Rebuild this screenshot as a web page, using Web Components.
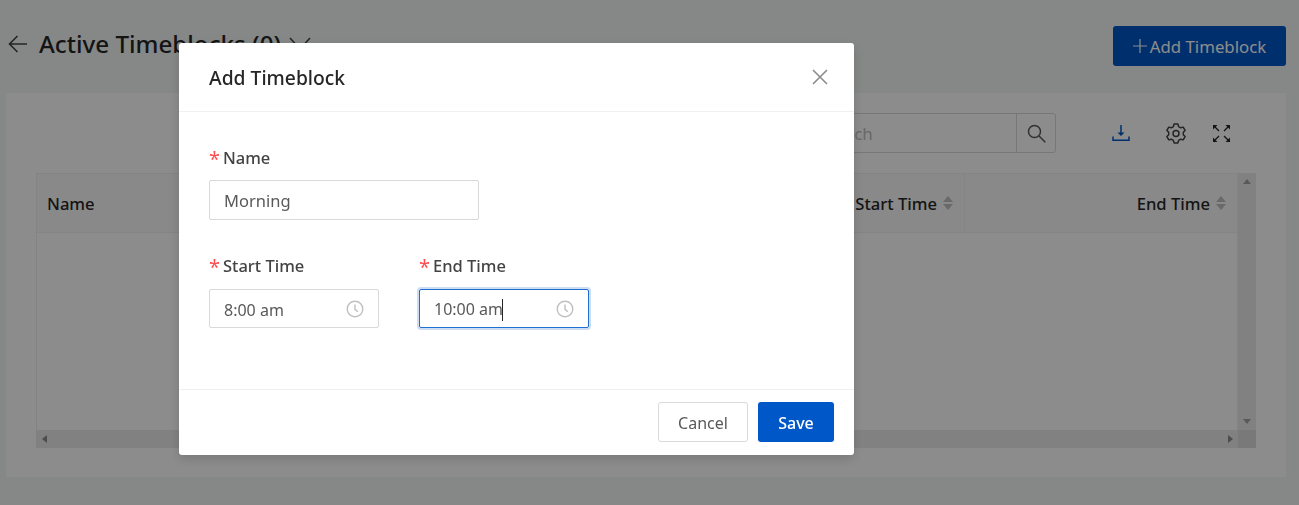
<!DOCTYPE html>
<html lang="en">
<head>
<meta charset="utf-8">
<title>Active Timeblocks</title>
<style>
  html, body { margin: 0; height: 100%; }
  body { background: #f3f7f4; font-family: "Noto Sans", "Liberation Sans", sans-serif; color: #262626; overflow: hidden; }
</style>
</head>
<body>
<tb-page>
  <tb-table></tb-table>
</tb-page>
<tb-modal heading="Add Timeblock">
  <tb-field label="Name" style="--w:270px">
    <tb-input value="Morning" style="--fs:16.5px"></tb-input>
  </tb-field>
  <div style="display:flex;gap:40px;margin-top:35px">
    <tb-field label="Start Time" style="--w:170px;--lb:12px">
      <tb-input value="8:00 am" clock style="--h:39px;--pt:2px"></tb-input>
    </tb-field>
    <tb-field label="End Time" style="--w:170px;--lb:12px">
      <tb-input value="10:00 am" clock focused style="--h:39px;--pt:2px"></tb-input>
    </tb-field>
  </div>
</tb-modal>

<script>
// Small helper: every element gets an open shadow root from a string
const tpl = (host, html) => {
  host.attachShadow({ mode: 'open' }).innerHTML = html;
};

const clockIcon = `<svg width="18" height="18" viewBox="0 0 18 18" fill="none" stroke="#bfbfbf" stroke-width="1.4"><circle cx="9" cy="9" r="7.8"/><path d="M9 4.6V9.4l2.8 2.4"/></svg>`;

// six lobed gear, same outline as the settings icon
const gearPath = () => {
  const pts = [];
  for (let i = 0; i < 6; i++) {
    const a = (Math.PI / 3) * i - Math.PI / 2;
    [[-0.36, 7.4], [-0.2, 9.6], [0.2, 9.6], [0.36, 7.4]].forEach(([d, r]) => {
      pts.push((10 + r * Math.cos(a + d)).toFixed(2) + ' ' + (10.5 + r * Math.sin(a + d)).toFixed(2));
    });
  }
  return 'M' + pts.join('L') + 'Z';
};

class TbPage extends HTMLElement {
  constructor() {
    super();
    tpl(this, `
      <style>
        :host { display: block; padding: 26px 13px 28px 6px; }
        .head { display: flex; align-items: flex-start; height: 40px; margin-bottom: 27px; }
        .back { display: flex; margin: 9px 12px 0 2px; }
        h1 { margin: -2px 0 0; font-size: 24.2px; font-weight: 500; line-height: 40px; color: #262626; white-space: nowrap; }
        .chev { display: flex; margin: 11px 0 0 8px; }
        .add { margin-left: auto; width: 173px; height: 40px; box-sizing: border-box; background: #0057c8; color: #fff; border-radius: 3px;
               display: flex; align-items: center; justify-content: center; font-size: 16.8px; gap: 3px; }
        .card { background: #fff; padding: 20px 30px 29px; height: 384px; box-sizing: border-box; display: flex; flex-direction: column; }
        .tools { display: flex; align-items: center; height: 40px; margin-bottom: 20px; justify-content: flex-end; }
        .search { display: flex; width: 256px; height: 40px; box-sizing: border-box; border: 1px solid #d9d9d9; border-radius: 3px; }
        .search span { flex: 1; padding: 1px 0 0 18px; line-height: 38px; font-size: 17px; color: #bfbfbf; text-align: left; }
        .search i { width: 38px; border-left: 1px solid #d9d9d9; display: flex; align-items: center; justify-content: center; }
        .icons { display: flex; align-items: center; }
        .icons svg { display: block; }
      </style>
      <div class="head">
        <span class="back"><svg width="19" height="18" viewBox="0 0 19 18" fill="none" stroke="#434343" stroke-width="1.6"><path d="M19 9H1.500M9.500 1L1.500 9l8 8"/></svg></span>
        <h1>Active Timeblocks (0)</h1>
        <span class="chev"><svg width="22" height="14" viewBox="0 0 22 14" fill="none" stroke="#434343" stroke-width="1.6"><path d="M1 1l10 11L21 1"/></svg></span>
        <div class="add"><svg width="14" height="14" viewBox="0 0 14 14" stroke="#fff" stroke-width="1.2"><path d="M7 0v14M0 7h14"/></svg><span>Add Timeblock</span></div>
      </div>
      <div class="card">
        <div class="tools">
          <div class="search"><span>Search</span><i><svg width="19" height="19" viewBox="0 0 19 19" fill="none" stroke="#595959" stroke-width="1.5"><circle cx="7.500" cy="7.500" r="6"/><path d="M12 12l6.300 6.300"/></svg></i></div>
          <div class="icons">
            <svg style="margin-left:56px" width="18" height="18" viewBox="0 0 18 18" fill="none" stroke="#0057c8" stroke-width="1.500"><path d="M9 1v10"/><path d="M5.500 8.500h7L9 12z" fill="#0057c8" stroke="none"/><path d="M1 12.500v3.700h16v-3.700"/></svg>
            <svg style="margin-left:36px" width="20" height="21" viewBox="0 0 20 21" fill="none" stroke="#434343" stroke-width="1.500" stroke-linejoin="round"><path class="gear"/><circle cx="10" cy="10.500" r="3"/></svg>
            <svg style="margin-left:27px" width="17" height="17" viewBox="0 0 17 17" fill="#262626" stroke="#262626" stroke-width="1.300"><g stroke="none"><path d="M0 0h4.500L0 4.500zM17 0v4.500L12.500 0zM0 17v-4.500L4.500 17zM17 17h-4.500L17 12.500z"/></g><path d="M2 2l4 4M15 2l-4 4M2 15l4-4M15 15l-4-4"/></svg>
            <span style="width:26px"></span>
          </div>
        </div>
        <slot></slot>
      </div>`);
    this.shadowRoot.querySelector('.gear').setAttribute('d', gearPath());
  }
}

class TbSorter extends HTMLElement {
  constructor() {
    super();
    tpl(this, `
      <style>
        :host { display: inline-flex; flex-direction: column; gap: 2px; margin-left: 6px; }
        i { display: block; width: 0; height: 0; border-left: 5px solid transparent; border-right: 5px solid transparent; }
        .u { border-bottom: 6px solid #bfbfbf; }
        .d { border-top: 6px solid #bfbfbf; }
      </style>
      <i class="u"></i><i class="d"></i>`);
  }
}

class TbTable extends HTMLElement {
  constructor() {
    super();
    tpl(this, `
      <style>
        :host { display: grid; grid-template-columns: 1fr 18px; grid-template-rows: 1fr 18px; height: 275px; font-size: 16.6px; }
        .body { border: 1px solid #f0f0f0; border-bottom: 0; display: flex; flex-direction: column; min-width: 0; }
        .row { display: grid; grid-template-columns: 1fr 230px 272px; height: 59px; box-sizing: border-box; background: #fafafa; border-bottom: 1px solid #f0f0f0; font-weight: 500; color: #262626; }
        .c { display: flex; align-items: center; padding: 0 11px 0 10px; }
        .r { justify-content: flex-end; border-right: 1px solid #f0f0f0; }
        .r:last-child { border-right: 0; }
        .v, .h { background: #ececec; position: relative; }
        .corner { background: #dcdcdc; }
        .a { position: absolute; width: 0; height: 0; border: 4px solid transparent; }
        .up { top: 6px; left: 5px; border-bottom: 5px solid #a3a3a3; border-top: 0; }
        .dn { bottom: 6px; left: 5px; border-top: 5px solid #a3a3a3; border-bottom: 0; }
        .lf { left: 6px; top: 5px; border-right: 5px solid #8c8c8c; border-left: 0; }
        .rt { right: 5px; top: 5px; border-left: 5px solid #8c8c8c; border-right: 0; }
      </style>
      <div class="body">
        <div class="row">
          <div class="c">Name</div>
          <div class="c r">Start Time<tb-sorter></tb-sorter></div>
          <div class="c r">End Time<tb-sorter></tb-sorter></div>
        </div>
      </div>
      <div class="v"><i class="a up"></i><i class="a dn"></i></div>
      <div class="h"><i class="a lf"></i><i class="a rt"></i></div>
      <div class="corner"></div>`);
  }
}

class TbModal extends HTMLElement {
  constructor() {
    super();
    tpl(this, `
      <style>
        :host { position: fixed; inset: 0; background: rgba(0,0,0,.45); display: flex; justify-content: flex-start; align-items: flex-start; padding: 43px 0 0 179px; box-sizing: border-box; }
        .box { width: 675px; height: 412px; background: #fff; border-radius: 3px; box-shadow: 0 4px 12px rgba(0,0,0,.15); display: flex; flex-direction: column; }
        header { height: 69px; box-sizing: border-box; border-bottom: 1px solid #f0f0f0; display: flex; align-items: center; justify-content: space-between; padding: 0 26px 0 30px; }
        h2 { margin: 0; font-size: 19.3px; font-weight: 500; color: #262626; }
        header svg { display: block; }
        main { flex: 1; padding: 35px 30px 0; }
        footer { height: 66px; box-sizing: border-box; border-top: 1px solid #f0f0f0; display: flex; justify-content: flex-end; gap: 10px; padding: 12px 20px 0; }
        .btn { height: 40px; box-sizing: border-box; border-radius: 3px; font-size: 16px; display: flex; align-items: center; justify-content: center; padding-top: 1px; }
        .cancel { width: 90px; border: 1px solid #d9d9d9; color: #595959; }
        .save { width: 76px; background: #0057c8; color: #fff; font-weight: 500; }
      </style>
      <div class="box">
        <header>
          <h2></h2>
          <svg width="16" height="16" viewBox="0 0 16 16" fill="none" stroke="#8c8c8c" stroke-width="1.6"><path d="M1 1l14 14M15 1L1 15"/></svg>
        </header>
        <main><slot></slot></main>
        <footer><div class="btn cancel">Cancel</div><div class="btn save">Save</div></footer>
      </div>`);
    this.shadowRoot.querySelector('h2').textContent = this.getAttribute('heading');
  }
}

class TbField extends HTMLElement {
  constructor() {
    super();
    tpl(this, `
      <style>
        :host { display: block; width: var(--w); }
        label { display: flex; align-items: center; height: 22px; line-height: 22px; margin-bottom: var(--lb, 11px); font-size: 16.5px; font-weight: 500; color: #434343; }
        b { width: 14px; flex: none; color: #ff4d4f; font-weight: 400; font-size: 20px; line-height: 22px; transform: translateY(1px); }
      </style>
      <label><b>*</b><span></span></label>
      <slot></slot>`);
    this.shadowRoot.querySelector('span').textContent = this.getAttribute('label');
  }
}

class TbInput extends HTMLElement {
  constructor() {
    super();
    const focused = this.hasAttribute('focused');
    tpl(this, `
      <style>
        :host { display: block; }
        .box { height: var(--h, 40px); box-sizing: border-box; border: 1px solid #d9d9d9; border-radius: 2px; display: flex; align-items: center; padding: 0 14px; font-size: var(--fs, 16px); color: #595959; }
        .on { border-color: #1f6fd1; box-shadow: 0 0 0 2px rgba(0,87,200,.2); }
        .val { flex: 1; white-space: nowrap; padding-top: var(--pt, 0); }
        .caret { display: inline-block; width: 1px; height: 22px; background: #262626; vertical-align: middle; margin-left: -1px; }
        svg { display: block; }
      </style>
      <div class="box ${focused ? 'on' : ''}">
        <span class="val"><span class="t"></span>${focused ? '<span class="caret"></span>' : ''}</span>
        ${this.hasAttribute('clock') ? clockIcon : ''}
      </div>`);
    this.shadowRoot.querySelector('.t').textContent = this.getAttribute('value');
  }
}

customElements.define('tb-page', TbPage);
customElements.define('tb-sorter', TbSorter);
customElements.define('tb-table', TbTable);
customElements.define('tb-modal', TbModal);
customElements.define('tb-field', TbField);
customElements.define('tb-input', TbInput);
</script>
</body>
</html>
